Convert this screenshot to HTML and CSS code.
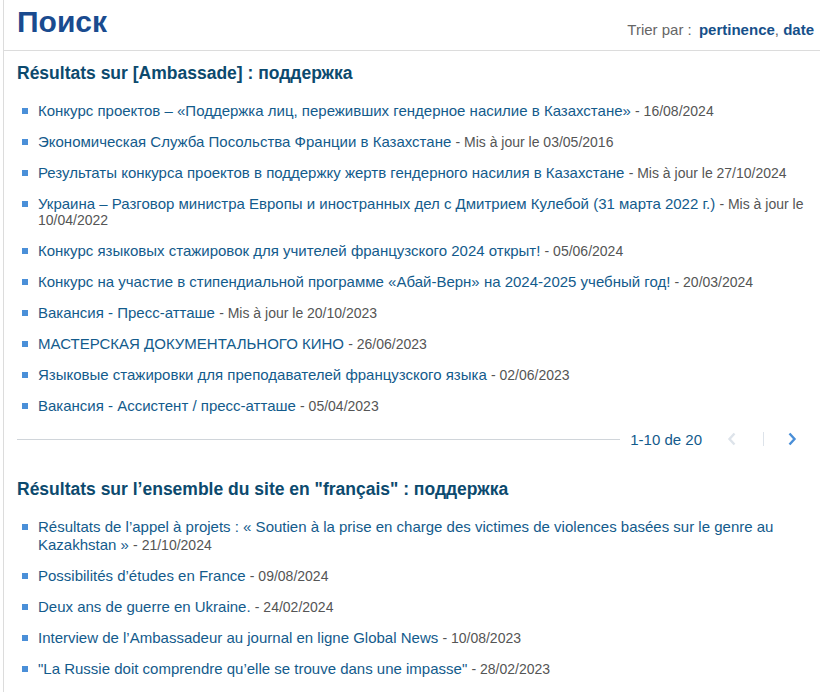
FILE: index.html
```html
<!DOCTYPE html>
<html lang="fr">
<head>
  <meta charset="UTF-8">
  <title>Поиск</title>
  <link rel="stylesheet" href="styles.css">
</head>
<body>
  <div class="page">
    <div class="head">
      <h1 class="title">Поиск</h1>
      <div class="sort">Trier par : <a href="#">pertinence</a>, <a href="#">date</a></div>
    </div>

    <div class="section">
      <h2>Résultats sur [Ambassade] : поддержка</h2>
      <ul class="results">
        <li><a href="#">Конкурс проектов – «Поддержка лиц, переживших гендерное насилие в Казахстане»</a> <span class="date">- 16/08/2024</span></li>
        <li><a href="#">Экономическая Служба Посольства Франции в Казахстане</a> <span class="date">- Mis à jour le 03/05/2016</span></li>
        <li><a href="#">Результаты конкурса проектов в поддержку жертв гендерного насилия в Казахстане</a> <span class="date">- Mis à jour le 27/10/2024</span></li>
        <li><a href="#">Украина – Разговор министра Европы и иностранных дел с Дмитрием Кулебой (31 марта 2022 г.)</a> <span class="date">- Mis à jour le 10/04/2022</span></li>
        <li><a href="#">Конкурс языковых стажировок для учителей французского 2024 открыт!</a> <span class="date">- 05/06/2024</span></li>
        <li><a href="#">Конкурс на участие в стипендиальной программе «Абай-Верн» на 2024-2025 учебный год!</a> <span class="date">- 20/03/2024</span></li>
        <li><a href="#">Вакансия - Пресс-атташе</a> <span class="date">- Mis à jour le 20/10/2023</span></li>
        <li><a href="#">МАСТЕРСКАЯ ДОКУМЕНТАЛЬНОГО КИНО</a> <span class="date">- 26/06/2023</span></li>
        <li><a href="#">Языковые стажировки для преподавателей французского языка</a> <span class="date">- 02/06/2023</span></li>
        <li><a href="#">Вакансия - Ассистент / пресс-атташе</a> <span class="date">- 05/04/2023</span></li>
      </ul>
      <div class="pager">
        <span class="pager-line"></span>
        <span class="pager-count">1-10 de 20</span>
        <span class="pager-btn off">
          <svg width="10" height="14" viewBox="0 0 10 14"><path d="M7.5 1.5 L2.5 7 L7.5 12.5" fill="none" stroke="currentColor" stroke-width="2.4"/></svg>
        </span>
        <span class="pager-sep"></span>
        <a class="pager-btn" href="#">
          <svg width="10" height="14" viewBox="0 0 10 14"><path d="M2.5 1.5 L7.5 7 L2.5 12.5" fill="none" stroke="currentColor" stroke-width="2.4"/></svg>
        </a>
      </div>
    </div>

    <div class="section">
      <h2>Résultats sur l’ensemble du site en "français" : поддержка</h2>
      <ul class="results wide">
        <li><a href="#">Résultats de l’appel à projets : « Soutien à la prise en charge des victimes de violences basées sur le genre au Kazakhstan »</a> <span class="date">- 21/10/2024</span></li>
        <li><a href="#">Possibilités d’études en France</a> <span class="date">- 09/08/2024</span></li>
        <li><a href="#">Deux ans de guerre en Ukraine.</a> <span class="date">- 24/02/2024</span></li>
        <li><a href="#">Interview de l’Ambassadeur au journal en ligne Global News</a> <span class="date">- 10/08/2023</span></li>
        <li><a href="#">"La Russie doit comprendre qu’elle se trouve dans une impasse"</a> <span class="date">- 28/02/2023</span></li>
      </ul>
    </div>
  </div>
</body>
</html>
```

FILE: styles.css
```css
* { box-sizing:border-box; margin:0; padding:0; }
body { font-family:"Liberation Sans", Arial, sans-serif; background:#fff; color:#555; }
a { text-decoration:none; }

.page { margin-left:3px; border-left:1px solid #dcdcdc; min-height:100vh; }

.head {
  display:flex; justify-content:space-between; align-items:flex-start;
  padding:5px 6px 11px 13px;
  border-bottom:1px solid #dcdcdc;
}
.title { font-size:30px; line-height:34px; font-weight:700; color:#1a4b8f; }
.sort { margin-top:17px; font-size:15px; line-height:16px; color:#666; }
.sort a { color:#16508a; font-weight:700; margin-left:3px; }
.sort a + a { margin-left:0; }

.section { padding:0 13px 0 13px; }
.section h2 { margin-top:11px; font-size:17.5px; line-height:22px; font-weight:700; color:#0c4a6e; }
.section + .section h2 { margin-top:29px; }

.results { list-style:none; margin-top:19px; padding-left:21px; }
.results li { position:relative; font-size:15px; line-height:16px; margin-bottom:15px; }
.results li::before {
  content:""; position:absolute; left:-16px; top:5px;
  width:6px; height:6px; background:#4a8fd8;
}
.results.wide { margin-top:18px; }
.results.wide li { line-height:18px; margin-bottom:13px; }
.results.wide li::before { top:6px; }
.results a { color:#135b8c; }
.results .date { font-size:14px; line-height:14px; color:#555; }

.pager { display:flex; align-items:center; height:20px; }
.pager-line { flex:1; height:1px; background:#d0d5da; }
.pager-count { margin:0 15px 0 10px; font-size:15px; color:#135b8c; }
.pager-btn { display:flex; width:30px; justify-content:center; color:#4a8fd8; }
.pager-btn.off { color:#dde3ea; }
.pager-sep { width:1px; height:14px; margin:0 13px 0 16px; background:#dde3ea; }
```
